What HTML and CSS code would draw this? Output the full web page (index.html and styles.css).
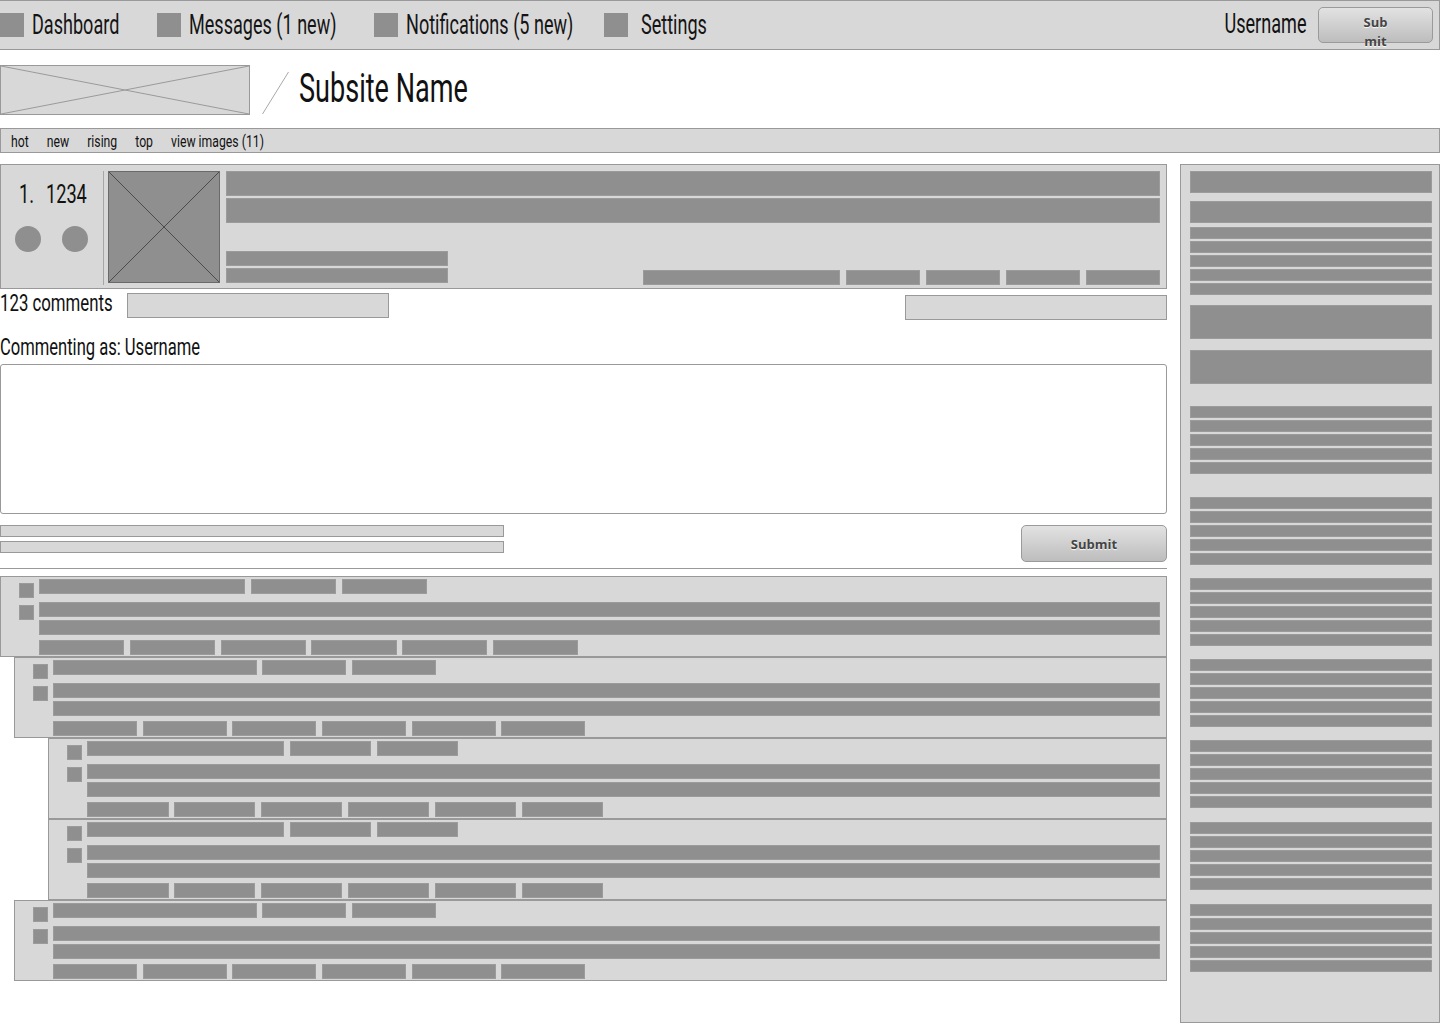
FILE: index.html
```html
<!DOCTYPE html>
<html lang="en">
<head>
<meta charset="utf-8">
<title>Subsite Name</title>
<link rel="stylesheet" href="styles.css">
</head>
<body>
<nav class="topbar">
  <ul class="topnav">
    <li class="topnav-item topnav-item-dash"><span class="topnav-icon"></span><span class="cond nav-label">Dashboard</span></li>
    <li class="topnav-item topnav-item-msg"><span class="topnav-icon"></span><span class="cond nav-label">Messages (1 new)</span></li>
    <li class="topnav-item topnav-item-notif"><span class="topnav-icon"></span><span class="cond nav-label">Notifications (5 new)</span></li>
    <li class="topnav-item topnav-item-settings"><span class="topnav-icon"></span><span class="cond nav-label">Settings</span></li>
  </ul>
  <div class="user-box">
    <span class="cond user-name">Username</span>
    <button class="btn btn-small" type="button"><span class="btn-small-label">Submit</span></button>
  </div>
</nav>

<header class="site-header">
  <div class="logo">
    <svg class="fill-svg" viewBox="0 0 100 100" preserveAspectRatio="none">
      <line x1="0" y1="0" x2="100" y2="100" stroke="#9a9a9a" stroke-width="1" vector-effect="non-scaling-stroke"/>
      <line x1="0" y1="100" x2="100" y2="0" stroke="#9a9a9a" stroke-width="1" vector-effect="non-scaling-stroke"/>
    </svg>
  </div>
  <svg class="slash" width="27" height="50" viewBox="0 0 27 50">
    <line x1="0.5" y1="49" x2="26.5" y2="7" stroke="#a8a8a8" stroke-width="1"/>
  </svg>
  <h1 class="cond site-name">Subsite Name</h1>
</header>

<div class="tabs">
  <div class="tab-list">
    <span class="tab">hot</span>
    <span class="tab">new</span>
    <span class="tab">rising</span>
    <span class="tab">top</span>
    <span class="tab">view images (11)</span>
  </div>
</div>

<div class="layout">
  <main class="main">
    <article class="post">
      <div class="post-vote">
        <div class="post-score"><span class="post-rank">1.</span><span>1234</span></div>
        <div class="vote-btns"><span class="vote-dot"></span><span class="vote-dot"></span></div>
      </div>
      <div class="thumb">
        <svg class="fill-svg" viewBox="0 0 100 100" preserveAspectRatio="none">
          <line x1="0" y1="0" x2="100" y2="100" stroke="#4a4a4a" stroke-width="1" vector-effect="non-scaling-stroke"/>
          <line x1="0" y1="100" x2="100" y2="0" stroke="#4a4a4a" stroke-width="1" vector-effect="non-scaling-stroke"/>
        </svg>
      </div>
      <div class="post-body">
        <div class="bar bar-title"></div>
        <div class="bar bar-title"></div>
        <div class="post-foot">
          <div class="post-meta">
            <div class="bar bar-meta"></div>
            <div class="bar bar-meta"></div>
          </div>
          <div class="post-actions">
            <div class="bar act act-wide"></div>
            <div class="bar act"></div>
            <div class="bar act"></div>
            <div class="bar act"></div>
            <div class="bar act"></div>
          </div>
        </div>
      </div>
    </article>

    <div class="comments-bar">
      <span class="comments-count"><span class="cond comments-count-text">123 comments</span></span>
      <div class="field"></div>
      <div class="field field-right"></div>
    </div>

    <div class="commenting-as"><span class="cond">Commenting as: Username</span></div>
    <textarea class="comment-input"></textarea>

    <div class="form-foot">
      <div class="form-hints">
        <div class="hint"></div>
        <div class="hint"></div>
      </div>
      <button class="btn btn-submit" type="button">Submit</button>
    </div>

    <hr class="divider">

    <section class="comments">
      <div class="comment">
        <div class="c-side"><span class="c-sq"></span><span class="c-sq"></span></div>
        <div class="c-body">
          <div class="c-head"><div class="bar c-h1"></div><div class="bar c-h2"></div><div class="bar c-h2"></div></div>
          <div class="bar c-line"></div>
          <div class="bar c-line c-line-2"></div>
          <div class="c-foot"><div class="bar c-f"></div><div class="bar c-f"></div><div class="bar c-f"></div><div class="bar c-f"></div><div class="bar c-f"></div><div class="bar c-f"></div></div>
        </div>
      </div>
      <div class="comment depth-1">
        <div class="c-side"><span class="c-sq"></span><span class="c-sq"></span></div>
        <div class="c-body">
          <div class="c-head"><div class="bar c-h1"></div><div class="bar c-h2"></div><div class="bar c-h2"></div></div>
          <div class="bar c-line"></div>
          <div class="bar c-line c-line-2"></div>
          <div class="c-foot"><div class="bar c-f"></div><div class="bar c-f"></div><div class="bar c-f"></div><div class="bar c-f"></div><div class="bar c-f"></div><div class="bar c-f"></div></div>
        </div>
      </div>
      <div class="comment depth-2">
        <div class="c-side"><span class="c-sq"></span><span class="c-sq"></span></div>
        <div class="c-body">
          <div class="c-head"><div class="bar c-h1"></div><div class="bar c-h2"></div><div class="bar c-h2"></div></div>
          <div class="bar c-line"></div>
          <div class="bar c-line c-line-2"></div>
          <div class="c-foot"><div class="bar c-f"></div><div class="bar c-f"></div><div class="bar c-f"></div><div class="bar c-f"></div><div class="bar c-f"></div><div class="bar c-f"></div></div>
        </div>
      </div>
      <div class="comment depth-2">
        <div class="c-side"><span class="c-sq"></span><span class="c-sq"></span></div>
        <div class="c-body">
          <div class="c-head"><div class="bar c-h1"></div><div class="bar c-h2"></div><div class="bar c-h2"></div></div>
          <div class="bar c-line"></div>
          <div class="bar c-line c-line-2"></div>
          <div class="c-foot"><div class="bar c-f"></div><div class="bar c-f"></div><div class="bar c-f"></div><div class="bar c-f"></div><div class="bar c-f"></div><div class="bar c-f"></div></div>
        </div>
      </div>
      <div class="comment depth-1">
        <div class="c-side"><span class="c-sq"></span><span class="c-sq"></span></div>
        <div class="c-body">
          <div class="c-head"><div class="bar c-h1"></div><div class="bar c-h2"></div><div class="bar c-h2"></div></div>
          <div class="bar c-line"></div>
          <div class="bar c-line c-line-2"></div>
          <div class="c-foot"><div class="bar c-f"></div><div class="bar c-f"></div><div class="bar c-f"></div><div class="bar c-f"></div><div class="bar c-f"></div><div class="bar c-f"></div></div>
        </div>
      </div>
    </section>
  </main>

  <aside class="sidebar">
    <div class="bar sb-head"></div>
    <div class="bar sb-head sb-head-2"></div>
    <div class="sb-lines sb-lines-first">
      <div class="bar sb-line"></div><div class="bar sb-line"></div><div class="bar sb-line"></div><div class="bar sb-line"></div><div class="bar sb-line"></div>
    </div>
    <div class="bar sb-tall sb-tall-1"></div>
    <div class="bar sb-tall sb-tall-2"></div>
    <div class="sb-lines sb-g1">
      <div class="bar sb-line"></div><div class="bar sb-line"></div><div class="bar sb-line"></div><div class="bar sb-line"></div><div class="bar sb-line"></div>
    </div>
    <div class="sb-lines sb-g2">
      <div class="bar sb-line"></div><div class="bar sb-line"></div><div class="bar sb-line"></div><div class="bar sb-line"></div><div class="bar sb-line"></div>
    </div>
    <div class="sb-lines sb-g3">
      <div class="bar sb-line"></div><div class="bar sb-line"></div><div class="bar sb-line"></div><div class="bar sb-line"></div><div class="bar sb-line"></div>
    </div>
    <div class="sb-lines sb-g3">
      <div class="bar sb-line"></div><div class="bar sb-line"></div><div class="bar sb-line"></div><div class="bar sb-line"></div><div class="bar sb-line"></div>
    </div>
    <div class="sb-lines sb-g3">
      <div class="bar sb-line"></div><div class="bar sb-line"></div><div class="bar sb-line"></div><div class="bar sb-line"></div><div class="bar sb-line"></div>
    </div>
    <div class="sb-lines sb-g4">
      <div class="bar sb-line"></div><div class="bar sb-line"></div><div class="bar sb-line"></div><div class="bar sb-line"></div><div class="bar sb-line"></div>
    </div>
    <div class="sb-lines sb-g4">
      <div class="bar sb-line"></div><div class="bar sb-line"></div><div class="bar sb-line"></div><div class="bar sb-line"></div><div class="bar sb-line"></div>
    </div>
  </aside>
</div>
</body>
</html>
```

FILE: styles.css
```css
* { box-sizing: border-box; }

html, body {
  margin: 0;
  padding: 0;
  background: #ffffff;
}

body {
  font-family: Roboto, "Liberation Sans", sans-serif;
  color: #111111;
  width: 1440px;
  height: 1024px;
  overflow: hidden;
}

/* condensed look: the wireframe font is a narrow gothic face */
.cond {
  display: inline-block;
  white-space: nowrap;
  transform: scaleX(var(--sx, 0.68));
  transform-origin: left center;
}

.fill-svg {
  display: block;
  width: 100%;
  height: 100%;
}

/* ---------- bars (placeholder blocks) ---------- */
.bar {
  background: #8f8f8f;
  box-shadow: inset 0 0 0 1px #9b9b9b;
}

/* ---------- top bar ---------- */
.topbar {
  height: 50px;
  background: #d8d8d8;
  border: 1px solid #999999;
  border-left: 0;
  display: flex;
  align-items: center;
  justify-content: space-between;
}

.topnav {
  list-style: none;
  margin: 0;
  padding: 0;
  display: flex;
  align-items: center;
}

.topnav-item {
  flex: none;
  display: flex;
  align-items: center;
  gap: 8px;
  font-size: 28px;
  line-height: 30px;
  color: #141414;
}

.topnav-item-dash { width: 157px; }
.topnav-item-msg { width: 217px; }
.topnav-item-notif { width: 230px; }
.topnav-item-settings { gap: 13px; }

.nav-label { --sx: 0.645; }

.topnav-icon {
  width: 24px;
  height: 24px;
  background: #8f8f8f;
  flex: none;
}

.user-box {
  display: flex;
  align-items: center;
  gap: 11px;
  padding-right: 6px;
}

.user-name {
  --sx: 0.67;
  font-size: 27px;
  line-height: 30px;
  margin-top: -2px;
  transform-origin: right center;
}

.btn {
  font-family: "Open Sans", "DejaVu Sans", sans-serif;
  font-weight: 700;
  font-size: 13px;
  color: #444444;
  text-shadow: 0 1px 1px rgba(255, 255, 255, 0.9);
  border: 1px solid #9a9a9a;
  border-radius: 5px;
  background: linear-gradient(#e2e2e2, #bdbdbd);
  cursor: pointer;
}

.btn-small {
  width: 115px;
  height: 36px;
  padding: 5px 0 0;
  display: flex;
  justify-content: center;
  align-items: flex-start;
  overflow: visible;
}

.btn-small-label {
  display: block;
  width: 30px;
  line-height: 19px;
  word-break: break-all;
  text-align: center;
}

/* ---------- site header ---------- */
.site-header {
  display: flex;
  align-items: center;
  height: 50px;
  margin-top: 15px;
}

.logo {
  width: 250px;
  height: 50px;
  background: #d8d8d8;
  border: 1px solid #999999;
}

.slash {
  display: block;
  margin-left: 12px;
  flex: none;
}

.site-name {
  --sx: 0.66;
  margin: 0 0 5px 10px;
  font-weight: 400;
  font-size: 41px;
  line-height: 44px;
  color: #111111;
}

/* ---------- tabs ---------- */
.tabs {
  margin-top: 13px;
  height: 25px;
  background: #d8d8d8;
  border: 1px solid #999999;
  display: flex;
  align-items: center;
  padding-left: 10px;
}

.tab-list {
  display: flex;
  gap: 25px;
  white-space: nowrap;
  transform: scaleX(0.72);
  transform-origin: left center;
}

.tab {
  font-size: 17px;
  line-height: 20px;
  color: #111111;
}

/* ---------- layout ---------- */
.layout {
  display: flex;
  align-items: flex-start;
  margin-top: 11px;
  gap: 13px;
}

.main {
  width: 1167px;
  flex: none;
}

/* ---------- post ---------- */
.post {
  display: flex;
  height: 125px;
  background: #d8d8d8;
  border: 1px solid #999999;
  padding: 6px 6px 3px 0;
}

.post-vote {
  width: 103px;
  flex: none;
  border-right: 1px solid #a6a6a6;
  display: flex;
  flex-direction: column;
}

.post-score {
  margin: 9px 0 0 18px;
  font-size: 26px;
  line-height: 28px;
  white-space: nowrap;
  transform: scaleX(0.7);
  transform-origin: left center;
}

.post-rank { margin-right: 17px; }

.vote-btns {
  display: flex;
  gap: 21px;
  margin: 18px 0 0 14px;
}

.vote-dot {
  width: 26px;
  height: 26px;
  border-radius: 50%;
  background: #8f8f8f;
}

.thumb {
  width: 112px;
  height: 112px;
  flex: none;
  margin-left: 4px;
  background: #8f8f8f;
  border: 1px solid #6a6a6a;
}

.post-body {
  flex: 1;
  margin-left: 6px;
  display: flex;
  flex-direction: column;
  gap: 2px;
}

.bar-title { height: 25px; }

.post-foot {
  margin-top: auto;
  display: flex;
  justify-content: space-between;
  align-items: flex-end;
}

.post-meta {
  display: flex;
  flex-direction: column;
  gap: 2px;
  margin-bottom: 2px;
}

.bar-meta {
  width: 222px;
  height: 15px;
}

.post-actions {
  display: flex;
  gap: 6px;
}

.act {
  width: 74px;
  height: 15px;
}

.act-wide { width: 197px; }

/* ---------- comments bar ---------- */
.comments-bar {
  display: flex;
  align-items: flex-start;
  margin-top: 4px;
}

.comments-count {
  width: 112px;
  flex: none;
  font-size: 24px;
  line-height: 21px;
}

.comments-count-text { --sx: 0.7; }

.field {
  width: 262px;
  height: 25px;
  background: #d8d8d8;
  border: 1px solid #999999;
  margin-left: 15px;
}

.field-right {
  margin-left: auto;
  margin-top: 2px;
}

.commenting-as {
  margin-top: 13px;
  font-size: 24px;
  line-height: 28px;
  --sx: 0.69;
}

.comment-input {
  display: block;
  width: 1167px;
  height: 150px;
  margin: 3px 0 0;
  border: 1px solid #999999;
  border-radius: 3px;
  background: #ffffff;
  resize: none;
}

.form-foot {
  margin-top: 11px;
  display: flex;
  justify-content: space-between;
  align-items: flex-start;
}

.form-hints {
  display: flex;
  flex-direction: column;
  gap: 4px;
}

.hint {
  width: 504px;
  height: 12px;
  background: #d8d8d8;
  border: 1px solid #999999;
}

.btn-submit {
  width: 146px;
  height: 37px;
  padding: 0;
}

.divider {
  margin: 6px 0 0;
  border: 0;
  border-top: 1px solid #999999;
  height: 0;
}

/* ---------- comments ---------- */
.comments {
  margin-top: 7px;
}

.comment {
  display: flex;
  height: 81px;
  background: #d8d8d8;
  border: 1px solid #999999;
  padding: 2px 6px 0 0;
}

.depth-1 { margin-left: 14px; }
.depth-2 { margin-left: 48px; }

.c-side {
  width: 38px;
  flex: none;
  display: flex;
  flex-direction: column;
  gap: 7px;
  padding: 4px 0 0 18px;
}

.c-sq {
  width: 15px;
  height: 15px;
  background: #8f8f8f;
  box-shadow: inset 0 0 0 1px #9b9b9b;
}

.c-body {
  flex: 1;
  display: flex;
  flex-direction: column;
}

.c-head,
.c-foot {
  display: flex;
  gap: 0.5%;
}

.c-head .bar,
.c-foot .bar { height: 15px; }

.c-h1 { width: 18.4%; }
.c-h2 { width: 7.6%; }
.c-f { width: 7.6%; }

.c-line {
  height: 15px;
  margin-top: 8px;
}

.c-line-2 { margin-top: 3px; }

.c-foot { margin-top: 5px; }

/* ---------- sidebar ---------- */
.sidebar {
  width: 260px;
  flex: none;
  background: #d8d8d8;
  border: 1px solid #999999;
  padding: 6px 7px 50px 9px;
  display: flex;
  flex-direction: column;
}

.sb-head { height: 22px; }
.sb-head-2 { margin-top: 8px; }

.sb-lines {
  display: flex;
  flex-direction: column;
  gap: 2px;
}

.sb-line { height: 12px; }

.sb-lines-first { margin-top: 4px; }

.sb-tall { height: 34px; }
.sb-tall-1 { margin-top: 10px; }
.sb-tall-2 { margin-top: 11px; }

.sb-g1 { margin-top: 22px; }
.sb-g2 { margin-top: 23px; }
.sb-g3 { margin-top: 13px; }
.sb-g4 { margin-top: 14px; }
```
